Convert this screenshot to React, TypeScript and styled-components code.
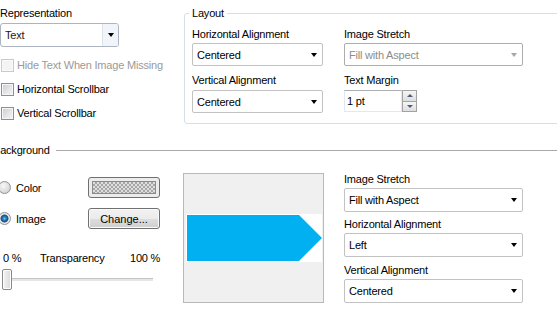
import React from 'react';
import styled, { createGlobalStyle } from 'styled-components';

const GlobalStyle = createGlobalStyle`
  html, body {
    margin: 0;
    padding: 0;
    background: #fff;
    overflow: hidden;
  }
  body {
    font-family: "Liberation Sans", Arial, sans-serif;
    font-size: 11px;
    letter-spacing: -0.2px;
    color: #000;
  }
`;

const Page = styled.div`
  width: 557px;
  height: 318px;
  overflow: hidden;
`;

const Top = styled.div`
  display: flex;
  align-items: flex-start;
`;

const LeftCol = styled.div`
  width: 184px;
  flex: none;
  padding-top: 7px;
  display: flex;
  flex-direction: column;
`;

const Label = styled.div<{ $gap?: number; $muted?: boolean }>`
  height: 13px;
  line-height: 13px;
  white-space: nowrap;
  margin-top: ${(p) => p.$gap ?? 0}px;
  color: ${(p) => (p.$muted ? '#9a9a9a' : '#000')};
`;

const SelectBox = styled.div<{ $w: number; $h: number; $gap?: number; $disabled?: boolean }>`
  box-sizing: border-box;
  width: ${(p) => p.$w}px;
  height: ${(p) => p.$h}px;
  margin-top: ${(p) => p.$gap ?? 2}px;
  border: 1px solid ${(p) => (p.$disabled ? '#adadad' : '#c2c2c2')};
  border-radius: 2px;
  background: #fff;
  display: flex;
  align-items: center;
  padding-left: 4px;
  color: ${(p) => (p.$disabled ? '#8c8c8c' : '#000')};
`;

const SelectValue = styled.span`
  flex: 1;
  white-space: nowrap;
  overflow: hidden;
`;

const Caret = styled.span<{ $disabled?: boolean }>`
  width: 0;
  height: 0;
  margin-right: 5px;
  border-left: 3.5px solid transparent;
  border-right: 3.5px solid transparent;
  border-top: 4px solid ${(p) => (p.$disabled ? '#a6a6a6' : '#000')};
`;

const ComboBox = styled.div`
  box-sizing: border-box;
  width: 119px;
  height: 24px;
  margin-top: 3px;
  border: 1px solid #abb4c0;
  border-radius: 3px;
  display: flex;
  align-items: stretch;
  background: #fff;
  color: #1a1a1a;
`;

const ComboText = styled.span`
  flex: 1;
  padding-left: 4px;
  display: flex;
  align-items: center;
`;

const ComboButton = styled.span`
  width: 15px;
  border-left: 1px solid #dde3ea;
  background: #f1f4f8;
  border-radius: 0 2px 2px 0;
  display: flex;
  align-items: center;
  justify-content: center;
`;

const CheckList = styled.div`
  margin-top: 6px;
`;

const CheckRow = styled.label<{ $disabled?: boolean }>`
  height: 24px;
  display: flex;
  align-items: center;
  gap: 3px;
  padding-left: 1px;
  color: ${(p) => (p.$disabled ? '#9a9a9a' : '#000')};
  white-space: nowrap;
`;

const CheckBox = styled.span<{ $disabled?: boolean }>`
  box-sizing: border-box;
  width: 13px;
  height: 13px;
  border: 1px solid ${(p) => (p.$disabled ? '#cacaca' : '#8e8f8f')};
  background: ${(p) =>
    p.$disabled ? '#f4f4f4' : 'linear-gradient(135deg, #c9ccd1 0%, #e6e7e9 60%, #f4f4f4 100%)'};
  box-shadow: inset 0 0 0 1px ${(p) => (p.$disabled ? '#f9f9f9' : '#f6f6f6')};
`;

const GroupBox = styled.fieldset`
  flex: 1;
  margin: 7px -4px 0 0;
  padding: 0;
  min-inline-size: 0;
  border: 1px solid #d5dfe5;
  border-radius: 3px;
`;

const Legend = styled.legend`
  margin-left: 4px;
  padding: 0 3px;
  line-height: 13px;
  font-size: 11px;
`;

const GroupGrid = styled.div`
  display: grid;
  grid-template-columns: 130px 179px;
  column-gap: 22px;
  padding: 8px 0 10px 7px;
`;

const GroupCell = styled.div`
  display: flex;
  flex-direction: column;
`;

const Spinner = styled.div`
  display: flex;
  height: 22px;
  margin-top: 3px;
`;

const SpinInput = styled.div`
  box-sizing: border-box;
  width: 58px;
  border: 1px solid #e2e8ee;
  border-top-color: #abadb3;
  padding-left: 2px;
  display: flex;
  align-items: center;
`;

const SpinButtons = styled.div`
  width: 15px;
  display: flex;
  flex-direction: column;
`;

const SpinButton = styled.span<{ $down?: boolean }>`
  flex: 1;
  box-sizing: border-box;
  border: 1px solid #a3a3a3;
  border-top-width: ${(p) => (p.$down ? 0 : 1)}px;
  background: linear-gradient(#f6f6f6, #dedede);
  display: flex;
  align-items: center;
  justify-content: center;

  &::after {
    content: '';
    border-left: 3px solid transparent;
    border-right: 3px solid transparent;
    ${(p) => (p.$down ? 'border-top: 3px solid #4e5d7c;' : 'border-bottom: 3px solid #4e5d7c;')}
  }
`;

const SectionHead = styled.div`
  display: flex;
  align-items: center;
  gap: 6px;
  margin-top: 19px;
  margin-left: -7px;
  height: 13px;
  line-height: 13px;
`;

const SectionRule = styled.span`
  flex: 1;
  height: 1px;
  background: #a9a9a9;
`;

const Body = styled.div`
  display: flex;
  align-items: flex-start;
  margin-top: 16px;
`;

const BgCol = styled.div`
  width: 183px;
  flex: none;
  display: flex;
  flex-direction: column;
`;

const OptionGrid = styled.div`
  display: grid;
  grid-template-columns: 88px 72px;
  grid-auto-rows: 21px;
  row-gap: 10px;
  margin-top: 4px;
`;

const RadioRow = styled.label`
  display: flex;
  align-items: center;
  gap: 5px;
  margin-left: -2px;
`;

const Radio = styled.span<{ $on?: boolean }>`
  box-sizing: border-box;
  width: 13px;
  height: 13px;
  border-radius: 50%;
  border: 1px solid #929292;
  background: ${(p) =>
    p.$on
      ? 'radial-gradient(circle at 50% 50%, #7fc8f5 0, #2a86c9 1.5px, #14558f 3.2px, #3d6f98 3.8px, #e4e4e4 4.3px, #f2f2f2 100%)'
      : 'radial-gradient(circle at 40% 35%, #f8f8f8 0, #dcdcdc 60%, #c8c8c8 100%)'};
`;

const Swatch = styled.span`
  box-sizing: border-box;
  border: 1px solid #707070;
  border-radius: 3px;
  padding: 3px;
  background: #ececec;
  display: flex;
`;

const Checker = styled.span`
  flex: 1;
  border: 1px solid #8c8c8c;
  background: repeating-conic-gradient(#a6a6a6 0 25%, #dedede 0 50%) 0 0 / 4px 4px;
`;

const Button = styled.button`
  box-sizing: border-box;
  margin: 0;
  padding: 0;
  border: 1px solid #707070;
  border-radius: 3px;
  background: linear-gradient(#f2f2f2 0%, #ebebeb 50%, #dddddd 51%, #cfcfcf 100%);
  box-shadow: inset 0 0 0 1px #fbfbfb;
  font: inherit;
  color: #000;
`;

const ScaleRow = styled.div`
  display: grid;
  grid-template-columns: 37px 90px auto;
  padding-left: 3px;
  margin-top: 23px;
  height: 13px;
  line-height: 13px;
  white-space: nowrap;
`;

const Slider = styled.div`
  width: 153px;
  height: 21px;
  margin-top: 4px;
  display: flex;
  align-items: center;
`;

const Thumb = styled.span`
  box-sizing: border-box;
  width: 10px;
  height: 21px;
  margin-left: 2px;
  border: 1px solid #888;
  border-radius: 2px;
  background: linear-gradient(90deg, #f4f4f4, #dadada);
  box-shadow: inset 0 0 0 1px #fff;
`;

const Track = styled.span`
  flex: 1;
  height: 2px;
  border-top: 1px solid #c4c4c4;
  background: #e6e6e6;
`;

const Preview = styled.div`
  box-sizing: border-box;
  width: 141px;
  height: 130px;
  border: 1px solid #b9b9b9;
  background: #f0f0f0;
  display: flex;
  align-items: center;
  padding-left: 2px;
`;

const RightCol = styled.div`
  width: 179px;
  margin-left: 20px;
  display: flex;
  flex-direction: column;
`;

function Select({
  value,
  w,
  h,
  gap,
  disabled,
}: {
  value: string;
  w: number;
  h: number;
  gap?: number;
  disabled?: boolean;
}) {
  return (
    <SelectBox $w={w} $h={h} $gap={gap} $disabled={disabled}>
      <SelectValue>{value}</SelectValue>
      <Caret $disabled={disabled} />
    </SelectBox>
  );
}

function Check({ label, disabled }: { label: string; disabled?: boolean }) {
  return (
    <CheckRow $disabled={disabled}>
      <CheckBox $disabled={disabled} />
      {label}
    </CheckRow>
  );
}

export default function App() {
  return (
    <Page>
      <GlobalStyle />
      <Top>
        <LeftCol>
          <Label>Representation</Label>
          <ComboBox>
            <ComboText>Text</ComboText>
            <ComboButton>
              <Caret style={{ marginRight: 0 }} />
            </ComboButton>
          </ComboBox>
          <CheckList>
            <Check label="Hide Text When Image Missing" disabled />
            <Check label="Horizontal Scrollbar" />
            <Check label="Vertical Scrollbar" />
          </CheckList>
        </LeftCol>
        <GroupBox>
          <Legend>Layout</Legend>
          <GroupGrid>
            <GroupCell>
              <Label>Horizontal Alignment</Label>
              <Select value="Centered" w={131} h={23} />
              <Label $gap={8}>Vertical Alignment</Label>
              <Select value="Centered" w={131} h={23} gap={3} />
            </GroupCell>
            <GroupCell>
              <Label>Image Stretch</Label>
              <Select value="Fill with Aspect" w={179} h={23} disabled />
              <Label $gap={8}>Text Margin</Label>
              <Spinner>
                <SpinInput>1 pt</SpinInput>
                <SpinButtons>
                  <SpinButton />
                  <SpinButton $down />
                </SpinButtons>
              </Spinner>
            </GroupCell>
          </GroupGrid>
        </GroupBox>
      </Top>

      <SectionHead>
        Background
        <SectionRule />
      </SectionHead>

      <Body>
        <BgCol>
          <OptionGrid>
            <RadioRow>
              <Radio />
              Color
            </RadioRow>
            <Swatch>
              <Checker />
            </Swatch>
            <RadioRow>
              <Radio $on />
              Image
            </RadioRow>
            <Button>Change...</Button>
          </OptionGrid>
          <ScaleRow>
            <span>0 %</span>
            <span>Transparency</span>
            <span>100 %</span>
          </ScaleRow>
          <Slider>
            <Thumb />
            <Track />
          </Slider>
        </BgCol>
        <Preview>
          <svg width="136" height="48" viewBox="0 0 136 48">
            <rect x="0" y="0" width="136" height="48" fill="#fff" />
            <polygon points="1,1 113,1 136,24 113,47 1,47" fill="#00b0f0" />
          </svg>
        </Preview>
        <RightCol>
          <Label>Image Stretch</Label>
          <Select value="Fill with Aspect" w={179} h={24} />
          <Label $gap={6}>Horizontal Alignment</Label>
          <Select value="Left" w={179} h={24} />
          <Label $gap={7}>Vertical Alignment</Label>
          <Select value="Centered" w={179} h={24} />
        </RightCol>
      </Body>
    </Page>
  );
}
